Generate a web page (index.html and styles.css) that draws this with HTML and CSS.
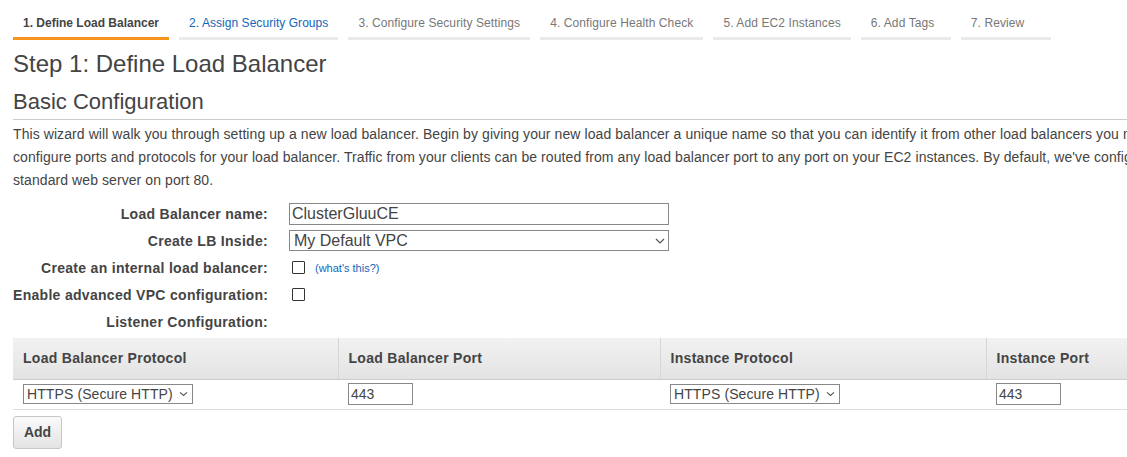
FILE: index.html
```html
<!DOCTYPE html>
<html>
<head>
<meta charset="utf-8">
<link rel="stylesheet" href="styles.css">
</head>
<body>
<div class="page">
  <nav class="tabs">
    <span class="tab active">1. Define Load Balancer</span>
    <span class="tab link">2. Assign Security Groups</span>
    <span class="tab">3. Configure Security Settings</span>
    <span class="tab">4. Configure Health Check</span>
    <span class="tab">5. Add EC2 Instances</span>
    <span class="tab">6. Add Tags</span>
    <span class="tab">7. Review</span>
  </nav>

  <h1 class="title">Step 1: Define Load Balancer</h1>
  <h2 class="subtitle">Basic Configuration</h2>

  <p class="intro">This wizard will walk you through setting up a new load balancer. Begin by giving your new load balancer a unique name so that you can identify it from other load balancers you might create. You will also need to configure ports and protocols for your load balancer. Traffic from your clients can be routed from any load balancer port to any port on your EC2 instances. By default, we've configured your load balancer with a standard web server on port 80.</p>

  <div class="form">
    <label class="label">Load Balancer name:</label>
    <div class="field"><input class="text-input wide" type="text" value="ClusterGluuCE"></div>

    <label class="label">Create LB Inside:</label>
    <div class="field">
      <span class="select wide-select">
        <span class="select-text">My Default VPC</span>
        <svg class="chev" width="10" height="6" viewBox="0 0 10 6"><path d="M1 1 L5 5 L9 1" fill="none" stroke="#555" stroke-width="1.2"/></svg>
      </span>
    </div>

    <label class="label">Create an internal load balancer:</label>
    <div class="field"><span class="checkbox"></span><a class="help">(what's this?)</a></div>

    <label class="label">Enable advanced VPC configuration:</label>
    <div class="field"><span class="checkbox"></span></div>

    <label class="label">Listener Configuration:</label>
    <div class="field"></div>
  </div>

  <table class="listeners">
    <colgroup>
      <col class="c1"><col class="c2"><col class="c3"><col class="c4">
    </colgroup>
    <thead>
      <tr>
        <th>Load Balancer Protocol</th>
        <th>Load Balancer Port</th>
        <th>Instance Protocol</th>
        <th>Instance Port</th>
      </tr>
    </thead>
    <tbody>
      <tr>
        <td><span class="select small-select"><span class="select-text">HTTPS (Secure HTTP)</span><svg class="chev" width="9" height="5" viewBox="0 0 9 5"><path d="M1 0.8 L4.5 4 L8 0.8" fill="none" stroke="#555" stroke-width="1.1"/></svg></span></td>
        <td><input class="text-input port" type="text" value="443"></td>
        <td><span class="select small-select"><span class="select-text">HTTPS (Secure HTTP)</span><svg class="chev" width="9" height="5" viewBox="0 0 9 5"><path d="M1 0.8 L4.5 4 L8 0.8" fill="none" stroke="#555" stroke-width="1.1"/></svg></span></td>
        <td><input class="text-input port" type="text" value="443"></td>
      </tr>
    </tbody>
  </table>

  <button class="btn">Add</button>
</div>
</body>
</html>
```

FILE: styles.css
```css
html, body {
  margin: 0;
  padding: 0;
  overflow: hidden;
  background: #fff;
}

body {
  font-family: "Liberation Sans", Arial, sans-serif;
  color: #444;
  font-size: 14px;
}

.page {
  width: 1336px;
  padding: 8px 13px 0;
}

.tabs {
  display: flex;
  gap: 10px;
}

.tab {
  font-size: 12px;
  line-height: 14px;
  padding: 8px 10px 7px;
  min-width: 70px;
  border-bottom: 3px solid #eaeaea;
  color: #777;
  white-space: nowrap;
  letter-spacing: 0.1px;
}

.tab.active {
  color: #444;
  border-bottom-color: #f7941d;
  font-weight: bold;
  letter-spacing: 0;
}

.tab.link {
  color: #1166bb;
  letter-spacing: 0.05px;
}

.title {
  font-size: 24px;
  font-weight: normal;
  line-height: 28px;
  margin: 10px 0 0;
}

.subtitle {
  font-size: 22px;
  font-weight: normal;
  line-height: 26px;
  margin: 11px 0 0;
  padding-bottom: 4px;
  border-bottom: 1px solid #ccc;
}

.intro {
  margin: 0;
  padding-top: 3px;
  line-height: 23px;
  letter-spacing: 0.08px;
}

.form {
  display: grid;
  grid-template-columns: 255px 1fr;
  column-gap: 21px;
  grid-auto-rows: 27px;
  align-items: center;
  margin-top: 8px;
}

.label {
  font-weight: bold;
  text-align: right;
  white-space: nowrap;
  letter-spacing: 0.3px;
}

.field {
  display: flex;
  align-items: center;
}

.text-input {
  font-family: "Liberation Sans", Arial, sans-serif;
  font-size: 14px;
  color: #444;
  border: 1px solid #888;
  height: 22px;
  box-sizing: border-box;
  padding: 0 2px;
  margin: 0;
  outline: none;
}

.text-input.wide {
  width: 380px;
  font-size: 16px;
}

.select {
  position: relative;
  display: inline-flex;
  align-items: center;
  box-sizing: border-box;
  border: 1px solid #888;
  background: #fff;
  color: #444;
}

.wide-select {
  width: 380px;
  height: 21px;
  padding-left: 4px;
  font-size: 16px;
}

.small-select {
  width: 170px;
  height: 20px;
  padding-left: 3px;
  font-size: 14px;
  letter-spacing: 0.1px;
}

.chev {
  position: absolute;
  right: 4px;
  top: 50%;
  transform: translateY(-50%);
}

.wide-select .chev {
  right: 3px;
}

.checkbox {
  display: inline-block;
  width: 11px;
  height: 11px;
  border: 1px solid #333;
  margin-left: 3px;
  border-radius: 1px;
}

.help {
  color: #1166bb;
  font-size: 11px;
  margin-left: 10px;
}

.listeners {
  width: 1300px;
  border-collapse: collapse;
  margin-top: 3px;
  table-layout: fixed;
}

.c1 { width: 325px; }
.c2 { width: 322px; }
.c3 { width: 326px; }
.c4 { width: 327px; }

.listeners th {
  height: 41px;
  box-sizing: border-box;
  text-align: left;
  padding: 0 10px;
  font-weight: bold;
  letter-spacing: 0.3px;
  background: linear-gradient(#f2f2f2, #e3e3e3);
  border-bottom: 1px solid #ccc;
}

.listeners th + th {
  border-left: 1px solid #d6d6d6;
  background-clip: padding-box;
}

.listeners td {
  padding: 0 10px;
  height: 29px;
  border-bottom: 1px solid #ddd;
  vertical-align: middle;
}

.text-input.port {
  width: 65px;
}

.btn {
  display: block;
  margin-top: 6px;
  font-family: "Liberation Sans", Arial, sans-serif;
  font-weight: bold;
  font-size: 14px;
  color: #444;
  width: 49px;
  height: 33px;
  border: 1px solid #c6c6c6;
  border-radius: 3px;
  background: linear-gradient(#fafafa, #e4e4e4);
  padding: 0;
}
```
